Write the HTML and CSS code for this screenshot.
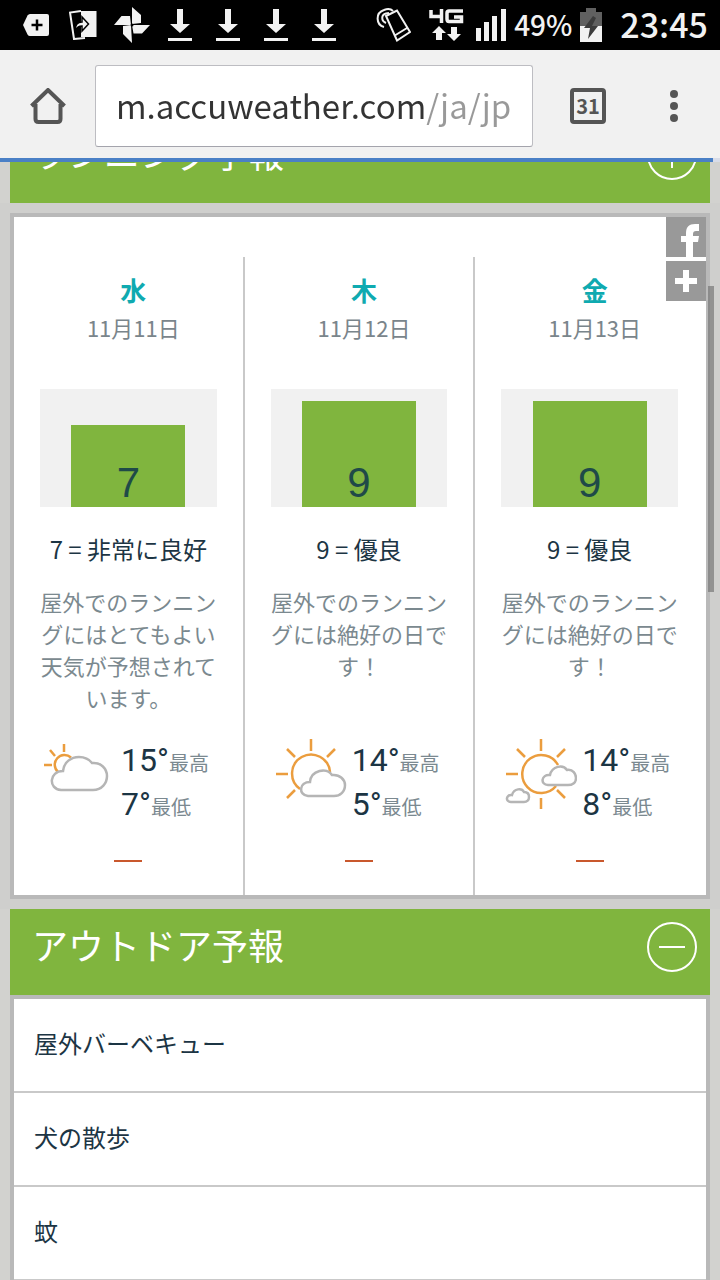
FILE: index.html
```html
<!DOCTYPE html>
<html lang="ja">
<head>
<meta charset="utf-8">
<meta name="viewport" content="width=device-width, initial-scale=1">
<title>AccuWeather</title>
<link rel="stylesheet" href="styles.css">
</head>
<body>
<svg class="defs" aria-hidden="true">
  <symbol id="download" viewBox="0 0 24 32"><path fill="#f2f2f2" d="M9 0h6v15h7L12 24 2 15h7zM0 29h24v3H0z"/></symbol>
</svg>

<div class="status">
  <div class="notices">
    <svg width="26" height="22" viewBox="0 0 26 22"><path fill="#f2f2f2" d="M7 0h17q2 0 2 2v18q0 2-2 2H7q-1.500 0-2.500-1.500L0 11 4.500 1.500Q5.500 0 7 0z"/><path d="M14 5.500v11M8.500 11h11" stroke="#000" stroke-width="2.500"/></svg>
    <svg class="transfer" width="28" height="30" viewBox="0 0 28 30"><path d="M12 1 1 2.500 5 29l11-1" fill="none" stroke="#f2f2f2" stroke-width="2"/><path fill="#f2f2f2" d="M12 1h15.500v26H12z"/><path d="M6 21c0-6 3-9 7-9V7l6.500 7-6.500 7v-5c-3 0-5 1-7 5z" fill="#f2f2f2" stroke="#000" stroke-width="1.500"/></svg>
    <svg class="photos" width="36" height="36" viewBox="0 0 36 36"><path fill="#f2f2f2" d="M18 0l9 8v8l-9 1zM0 18l7.500-9H16l1 9zM18 36l-9-9v-8l8-1zM36 18l-8 8.500h-8.500L18 18z"/><circle cx="18" cy="18" r="1.500"/></svg>
    <svg width="24" height="32"><use href="#download"/></svg>
    <svg width="24" height="32"><use href="#download"/></svg>
    <svg width="24" height="32"><use href="#download"/></svg>
    <svg width="24" height="32"><use href="#download"/></svg>
  </div>
  <div class="system">
    <svg width="35" height="34" viewBox="0 0 35 34"><g fill="none" stroke="#f2f2f2" stroke-width="2"><path d="M10 8 21 2.500 34 24l-13 8.500zM18 28l13-8"/><path d="M8 19C0 17-1 5 8 2c4-1.500 7-1 9 1M10 15C5 13 5 7 10 5.500l3-.5"/></g></svg>
    <svg class="lte" width="35" height="32" viewBox="0 0 35 32"><path d="M2 1v6.500h12M12.500 0v14M34 2H20q-2 0-2 2v6q0 2.500 2 2.500h12.500V8H25" fill="none" stroke="#f2f2f2" stroke-width="3.500"/><path fill="#f2f2f2" d="M10 17l7 7h-4v7H7v-7H3zM25 32l-7-7h4v-7h6v7h4z"/></svg>
    <svg width="30" height="32" viewBox="0 0 30 32"><path fill="#f2f2f2" d="M0 19h5v13H0zM8 13h5v19H8zM16 7h5v25h-5zM25 0h5v32h-5z"/></svg>
    <span class="percent">49%</span>
    <svg width="22" height="34" viewBox="0 0 22 34"><path fill="#606060" d="M6 0h10v4h6v14H0V4h6z"/><path fill="#f2f2f2" d="M0 18h22v16H0z"/><path fill="#3c3c3c" d="M13 8 4 20h6L8 31l10-13h-6l4-8z"/></svg>
    <time class="clock">23:45</time>
  </div>
</div>

<header class="toolbar">
  <button class="tool" aria-label="ホーム">
    <svg width="36" height="36" viewBox="0 0 36 36"><path d="M1.500 18 18 2l16.500 16M5.500 16v15q0 3 3 3h19q3 0 3-3V16" fill="none" stroke="#555" stroke-width="4"/></svg>
  </button>
  <div class="address"><input class="url" type="text" aria-label="アドレス" value="m.accuweather.com/ja/jp"></div>
  <button class="tool tabs" aria-label="31 タブ"><span class="tab-count">31</span></button>
  <button class="tool" aria-label="メニュー">
    <svg width="8" height="32" viewBox="0 0 8 32"><g fill="#555"><circle cx="4" cy="4" r="4"/><circle cx="4" cy="16" r="4"/><circle cx="4" cy="28" r="4"/></g></svg>
  </button>
</header>
<div class="progress"><div class="loaded"></div></div>

<main class="page">
  <section class="running">
    <div class="heading">
      <h2>ランニング予報</h2>
      <button class="toggle" aria-label="開く"><svg width="50" height="50" viewBox="0 0 50 50"><g fill="none" stroke="#fff" stroke-width="2"><circle cx="25" cy="25" r="24"/><path d="M12 25h26M25 12v26"/></g></svg></button>
    </div>
    <div class="card days">
      <article class="day">
        <h3>水</h3>
        <p class="date">11月11日</p>
        <div class="chart"><div class="bar" style="height: 82px">7</div></div>
        <p class="rating">7 = 非常に良好</p>
        <p class="note">屋外でのランニングにはとてもよい天気が予想されています。</p>
        <div class="weather">
          <svg width="72" height="72" viewBox="0 0 72 72" fill="none" stroke-width="2.500"><path stroke="#eb9d3e" d="M14 34A9.500 9.500 0 1 1 27 19.500M20 6v8M6 12l5 6M0 27h8"/><path stroke="#b5b5b5" d="M17 52c-13-1-12-19 2-19 1-9 8-14 16-14 6 0 10 2 13 6 9-1 15 6 15 13s-5 14-14 14z"/></svg>
          <div class="temps"><p>15°<small>最高</small></p><p>7°<small>最低</small></p></div>
        </div>
        <div class="dash"></div>
      </article>
      <article class="day">
        <h3>木</h3>
        <p class="date">11月12日</p>
        <div class="chart"><div class="bar" style="height: 106px">9</div></div>
        <p class="rating">9 = 優良</p>
        <p class="note">屋外でのランニングには絶好の日です！</p>
        <div class="weather">
          <svg width="72" height="72" viewBox="0 0 72 72" fill="none" stroke-width="2.500"><path stroke="#eb9d3e" d="M25 51A19 19 0 1 1 55 34M36 1v12M12 11l8 8M60 11l-8 8M1 36h12M12 60l8-8"/><path stroke="#b5b5b5" d="M33 58c-10-1-9-14 2-14 1-12 17-15 22-7 8-1 13 5 13 10 0 7-5 11-11 11z"/></svg>
          <div class="temps"><p>14°<small>最高</small></p><p>5°<small>最低</small></p></div>
        </div>
        <div class="dash"></div>
      </article>
      <article class="day">
        <h3>金</h3>
        <p class="date">11月13日</p>
        <div class="chart"><div class="bar" style="height: 106px">9</div></div>
        <p class="rating">9 = 優良</p>
        <p class="note">屋外でのランニングには絶好の日です！</p>
        <div class="weather">
          <svg width="72" height="72" viewBox="0 0 72 72" fill="none" stroke-width="2.500"><path stroke="#eb9d3e" d="M53 27A19 19 0 1 0 51 48M36 1v12M12 11l8 8M60 11l-8 8M1 36h12M52 52l8 8M36 60v11"/><path stroke="#b5b5b5" d="M43 47c-8 0-7-11 2-10 2-9 13-11 17-5 6-1 9 4 9 8 0 5-4 7-8 7zM6 64c-6 0-5-8 1-7 2-7 10-7 12-3 4 0 5 3 5 5 0 3-2 5-5 5z"/></svg>
          <div class="temps"><p>14°<small>最高</small></p><p>8°<small>最低</small></p></div>
        </div>
        <div class="dash"></div>
      </article>
      <div class="share">
        <button aria-label="Facebook"><svg width="40" height="40" viewBox="0 0 40 40"><path fill="#fff" d="M20 40V25h-5v-6h5v-3c0-6 3-9 9-9h4v7h-3c-2 0-3 1-3 3v2h6l-1 6h-5v15z"/></svg></button>
        <button aria-label="共有"><svg width="40" height="40" viewBox="0 0 40 40"><path d="M20 9v22M9 20h22" stroke="#fff" stroke-width="6"/></svg></button>
      </div>
    </div>
  </section>
  <section class="outdoor">
    <div class="heading">
      <h2>アウトドア予報</h2>
      <button class="toggle" aria-label="閉じる"><svg width="50" height="50" viewBox="0 0 50 50"><g fill="none" stroke="#fff" stroke-width="2"><circle cx="25" cy="25" r="24"/><path d="M12 25h26"/></g></svg></button>
    </div>
    <ul class="links">
      <li><a href="#bbq">屋外バーベキュー</a></li>
      <li><a href="#dog">犬の散歩</a></li>
      <li><a href="#mosquito">蚊</a></li>
    </ul>
  </section>
  <div class="scrollbar"></div>
</main>
</body>
</html>
```

FILE: styles.css
```css
* {
  box-sizing: border-box;
}

body {
  margin: 0;
  height: 100vh;
  display: flex;
  flex-direction: column;
  overflow: hidden;
  background: #d2d2cf;
  color: #1c3544;
  font-family: "Noto Sans CJK JP", sans-serif;
}

h2, h3, p, ul {
  margin: 0;
  padding: 0;
  font-weight: 400;
}

button {
  padding: 0;
  border: 0;
  background: none;
  font: inherit;
  color: inherit;
}

svg {
  display: block;
  flex: none;
}

.defs {
  position: absolute;
  width: 0;
  height: 0;
}

.status {
  flex: none;
  height: 50px;
  padding: 0 12px 0 23px;
  display: flex;
  align-items: center;
  justify-content: space-between;
  background: #000;
  color: #f2f2f2;
}

.notices {
  display: flex;
  align-items: center;
  gap: 24px;
}

.transfer {
  margin-left: -4px;
}

.photos {
  margin: 0 -6px 0 -7px;
}

.system {
  display: flex;
  align-items: center;
  gap: 8px;
}

.lte {
  margin: 0 4px 0 10px;
}

.percent,
.clock {
  padding-bottom: 2px;
  line-height: 44px;
  font-weight: 500;
}

.percent {
  font-size: 28px;
}

.clock {
  margin-left: 10px;
  font-size: 34px;
}

.toolbar {
  flex: none;
  height: 108px;
  padding: 15px 8px 11px 10px;
  display: flex;
  align-items: center;
  background: #f1f1f1;
}

.tool {
  width: 76px;
  height: 72px;
  display: grid;
  place-items: center;
}

.tabs {
  width: 96px;
  margin-left: 7px;
}

.tab-count {
  width: 36px;
  height: 36px;
  border: 4px solid #555;
  border-radius: 4px;
  font-size: 20px;
  line-height: 28px;
  font-weight: 700;
  color: #555;
}

.address {
  flex: 1;
  height: 82px;
  margin-left: 9px;
  padding: 0 16px 0 20px;
  border: 1px solid #bdbdc2;
  border-bottom-color: #a4a4ac;
  border-radius: 3px;
  background: #fff;
}

.url {
  width: 100%;
  height: 78px;
  padding: 0;
  border: 0;
  outline: 0;
  font: 33px "Noto Sans CJK JP", sans-serif;
  color: #333;
  background: linear-gradient(90deg, #333 310px, #999 310px);
  background-clip: text;
  -webkit-background-clip: text;
  -webkit-text-fill-color: transparent;
}

.progress {
  flex: none;
  height: 4px;
  background: #d8dce8;
}

.loaded {
  width: 99%;
  height: 4px;
  background: #4a80c6;
}

.page {
  position: relative;
  flex: 1;
  min-height: 0;
  overflow: hidden;
  padding: 0 10px;
}

.running {
  margin-top: -45px;
}

.heading {
  height: 86px;
  padding: 13px 13px 23px 22px;
  display: flex;
  align-items: center;
  justify-content: space-between;
  background: #80b53e;
  color: #fff;
}

.heading h2 {
  padding-bottom: 6px;
  font-size: 36px;
  line-height: 44px;
}

.card {
  position: relative;
  margin: 10px 0;
  border: 4px solid #b9b9b9;
  box-shadow: 0 0 0 10px #cfcfcd;
  background: #fff;
}

.days {
  padding-top: 40px;
  display: grid;
  grid-template-columns: repeat(3, 1fr);
}

.day {
  height: 638px;
  padding: 15px 26px 0;
  display: flex;
  flex-direction: column;
  text-align: center;
  border-right: 2px solid #c9c9c9;
}

.day:nth-child(3) {
  border-right-color: transparent;
}

.day h3 {
  padding-left: 10px;
  font-size: 26px;
  line-height: 36px;
  font-weight: 700;
  color: #0faab0;
}

.date {
  padding-left: 10px;
  font-size: 22px;
  line-height: 38px;
  color: #7a858b;
}

.chart {
  height: 118px;
  margin-top: 43px;
  display: flex;
  justify-content: center;
  align-items: flex-end;
  background: #f1f1f1;
}

.bar {
  width: 114px;
  display: flex;
  align-items: flex-end;
  justify-content: center;
  background: #80b53e;
  font-family: "Liberation Sans", sans-serif;
  font-size: 42px;
  line-height: 48px;
  color: #1f4a48;
}

.rating {
  margin-top: 22px;
  font-size: 24px;
  line-height: 40px;
}

.note {
  height: 128px;
  margin-top: 16px;
  font-size: 22px;
  line-height: 32px;
  color: #7b898f;
}

.weather {
  margin-top: 25px;
  margin-left: 4px;
  display: flex;
  gap: 5px;
  text-align: left;
}

.temps {
  white-space: nowrap;
}

.temps p {
  font-family: Roboto, "Noto Sans CJK JP", sans-serif;
  font-size: 32px;
  line-height: 44px;
}

.temps small {
  font-size: 20px;
  line-height: 20px;
  color: #7b8990;
}

.dash {
  width: 28px;
  height: 2px;
  margin: 34px auto 0;
  background: #c9582d;
}

.share {
  position: absolute;
  top: 0;
  right: 0;
  display: grid;
  gap: 4px;
}

.share button {
  background: #999;
}

.links {
  list-style: none;
  border: 4px solid #b9b9b9;
  background: #fff;
}

.links a {
  display: block;
  padding: 24px 20px 28px;
  border-bottom: 2px solid #c9c9c9;
  font-size: 24px;
  line-height: 40px;
  color: inherit;
  text-decoration: none;
}

.scrollbar {
  position: absolute;
  top: 124px;
  right: 6px;
  width: 6px;
  height: 306px;
  background: rgba(120, 120, 120, 0.7);
}
```
